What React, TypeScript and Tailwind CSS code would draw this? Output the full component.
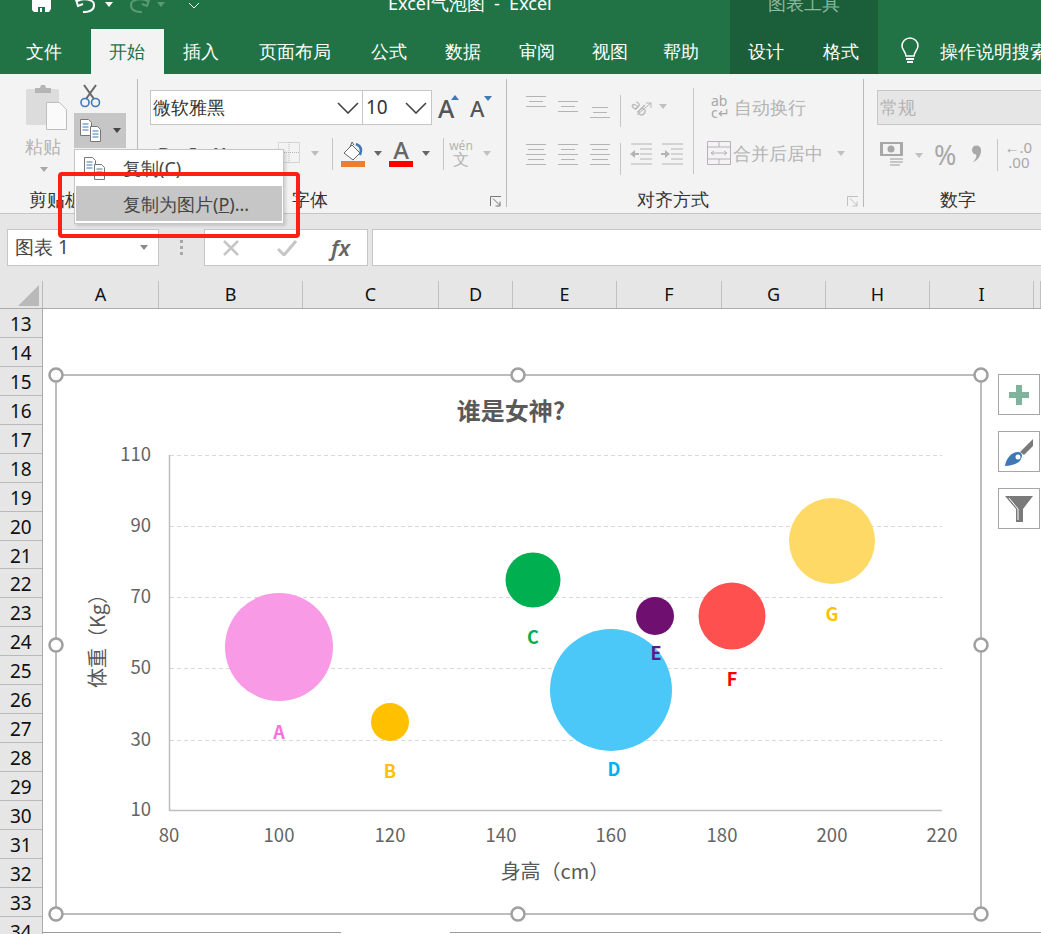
import React from "react";

const D = "#b4b4b4";

function Lines({ rows, w = 20, h = 22, color = D }: { rows: [number, number, number][]; w?: number; h?: number; color?: string }) {
  return (
    <svg width={w} height={h} viewBox={`0 0 ${w} ${h}`} className="block shrink-0">
      {rows.map(([y, a, b], i) => (
        <rect key={i} x={a} y={y} width={b - a} height="1" fill={color} />
      ))}
    </svg>
  );
}

function Caret({ className = "", color = "#a8a8a8" }: { className?: string; color?: string }) {
  return (
    <svg width="8" height="5" viewBox="0 0 8 5" className={"block shrink-0 " + className}>
      <path d="M0 0h8L4 5z" fill={color} />
    </svg>
  );
}

function Chev() {
  return (
    <svg width="22" height="12" viewBox="0 0 22 12" className="block shrink-0">
      <path d="M1 1l10 10L21 1" fill="none" stroke="#444" strokeWidth="1.6" />
    </svg>
  );
}

function CopyIcon() {
  return (
    <svg width="22" height="23" viewBox="0 0 22 23" className="block shrink-0">
      <path d="M.5.5h8l3 3v13H.5z" fill="#fff" stroke="#777" />
      <path d="M2.5 5h6M2.5 8h6M2.5 11h6" stroke="#3f78b5" />
      <path d="M10.5 7.5h7l3 3v12h-10z" fill="#fff" stroke="#777" />
      <path d="M12.500 12h6M12.500 15h6M12.500 18h6" stroke="#3f78b5" />
    </svg>
  );
}

function Launcher() {
  return (
    <svg width="12" height="11" viewBox="0 0 12 11" className="block">
      <path d="M.5 10V.5H11M3 2.500l7 7M10 5.500v4.500H5.500" fill="none" stroke="#777" />
    </svg>
  );
}

function Group({ width, label, labelClass = "", launcher, children }: { width: number; label: string; labelClass?: string; launcher?: string; children: React.ReactNode }) {
  return (
    <div className="relative flex flex-col h-[128px] border-r border-[#b9b9b9] shrink-0" style={{ width }}>
      <div className="flex-1 min-h-0">{children}</div>
      <div className={"relative h-[22px] text-[18px] leading-[28px] text-[#333] " + labelClass}>
        {label}
        {launcher && <div className={"absolute right-[4px] top-[11px] " + launcher}><Launcher /></div>}
      </div>
    </div>
  );
}

const columns: [string, number][] = [["A", 116], ["B", 144], ["C", 136], ["D", 74], ["E", 104], ["F", 105], ["G", 104], ["H", 104], ["I", 104], ["", 7]];
const rows = Array.from({ length: 22 }, (_, i) => 13 + i);

const bubbles = [
  { cx: 279, cy: 647, r: 54, fill: "#f99ae6", lab: "A", lx: 279, ly: 739, lc: "#fb6fdf" },
  { cx: 390, cy: 722, r: 19, fill: "#ffc000", lab: "B", lx: 390, ly: 778, lc: "#ffc000" },
  { cx: 533, cy: 580, r: 27.500, fill: "#00b050", lab: "C", lx: 533, ly: 644, lc: "#00b050" },
  { cx: 611, cy: 690, r: 61, fill: "#4bc8f7", lab: "D", lx: 614, ly: 776, lc: "#00b0f0" },
  { cx: 655, cy: 616, r: 19, fill: "#6f0f70", lab: "E", lx: 656, ly: 660, lc: "#5c1a8c" },
  { cx: 732, cy: 616, r: 33.500, fill: "#ff5050", lab: "F", lx: 732, ly: 686, lc: "#ff0000" },
  { cx: 832, cy: 541, r: 43, fill: "#ffd966", lab: "G", lx: 832, ly: 621, lc: "#ffc000" },
];

function Chart() {
  const handles: [number, number][] = [[56, 375], [518, 375], [981, 375], [56, 645], [981, 645], [56, 914], [518, 914], [981, 914]];
  const font = { fontFamily: "'Noto Sans CJK SC','Noto Sans',sans-serif" };
  return (
    <svg width="925" height="539" viewBox="56 375 925 539" className="absolute left-[56px] top-[66px] overflow-visible" style={font}>
      <rect x="56" y="375" width="925" height="539" fill="#fff" stroke="#a6a6a6" strokeWidth="1.500" />
      {[455, 526, 597, 668, 740].map((y) => (
        <line key={y} x1="170" x2="942" y1={y + 0.5} y2={y + 0.5} stroke="#d9d9d9" strokeDasharray="4 3" />
      ))}
      <path d="M169.500 455V810.500H942" fill="none" stroke="#bfbfbf" strokeWidth="1.500" />
      {[["110", 455], ["90", 526], ["70", 597], ["50", 668], ["30", 740], ["10", 810]].map(([t, y]) => (
        <text key={t} x="151" y={Number(y) + 6} textAnchor="end" fontSize="18.500" fill="#646464">{t}</text>
      ))}
      {[["80", 169], ["100", 279], ["120", 390], ["140", 501], ["160", 611], ["180", 722], ["200", 832], ["220", 942]].map(([t, x]) => (
        <text key={t} x={x} y="842" textAnchor="middle" fontSize="18.500" fill="#646464">{t}</text>
      ))}
      <text x="511" y="420" textAnchor="middle" fontSize="24" fontWeight="700" fill="#595959">谁是女神?</text>
      <text x="555" y="879" textAnchor="middle" fontSize="20" fill="#595959">身高（cm）</text>
      <text transform="translate(105 636) rotate(-90)" textAnchor="middle" fontSize="20" fill="#595959">体重（Kg）</text>
      {bubbles.map((b) => (
        <circle key={b.lab} cx={b.cx} cy={b.cy} r={b.r} fill={b.fill} />
      ))}
      {bubbles.map((b) => (
        <text key={b.lab} x={b.lx} y={b.ly} textAnchor="middle" fontSize="18" fontWeight="700" fill={b.lc}>{b.lab}</text>
      ))}
      {handles.map(([x, y], i) => (
        <circle key={i} cx={x} cy={y} r="6.500" fill="#fff" stroke="#a0a0a0" strokeWidth="2.500" />
      ))}
    </svg>
  );
}

export default function App() {
  return (
    <div className="relative w-[1041px] h-[934px] overflow-hidden bg-white flex flex-col font-['Noto_Sans_CJK_SC','Noto_Sans',sans-serif]">
      {/* title + tabs */}
      <div className="relative h-[74px] shrink-0 bg-[#217346] text-white overflow-hidden">
        <div className="flex h-[29px] overflow-hidden items-start">
          <svg width="22" height="12" viewBox="0 0 22 12" className="ml-[31px] shrink-0">
            <path d="M1 0h19v9l-2 3H3l-2-2z" fill="#fff" />
            <path d="M7 7h7v5H7z" fill="#217346" />
            <path d="M9 8h2v4H9z" fill="#fff" />
          </svg>
          <svg width="24" height="14" viewBox="0 0 24 14" className="ml-[21px] shrink-0">
            <path d="M3 1c6-3 17-2 17 4s-6 7-11 7" fill="none" stroke="#fff" strokeWidth="2" />
            <path d="M2 0l2 6 5-2" fill="none" stroke="#fff" strokeWidth="2" />
          </svg>
          <Caret color="#fff" className="ml-[7px] mt-[2px]" />
          <svg width="24" height="14" viewBox="0 0 24 14" className="ml-[14px] shrink-0">
            <path d="M21 1C15-2 4-1 4 5s6 7 11 7" fill="none" stroke="#5b9a78" strokeWidth="2" />
            <path d="M22 0l-2 6-5-2" fill="none" stroke="#5b9a78" strokeWidth="2" />
          </svg>
          <Caret color="#5b9a78" className="ml-[6px] mt-[2px]" />
          <svg width="12" height="7" viewBox="0 0 12 7" className="ml-[23px] mt-[2px] shrink-0">
            <path d="M1 1l5 5 5-5" fill="none" stroke="#fff" />
          </svg>
          <div className="ml-[188px] -mt-[10px] text-[18px] leading-[26px] whitespace-pre">Excel气泡图  -  Excel</div>
        </div>
        <div className="absolute left-[730px] top-0 w-[148px] h-[74px] bg-[#1b5e3a] flex justify-center">
          <div className="-mt-[10px] text-[18px] leading-[26px] text-[#8cb9a0]">图表工具</div>
        </div>
        <div className="relative flex h-[45px] text-[18px] leading-[45px]">
          <div className="w-[91px] shrink-0 text-center">
            <span className="mr-[3px]">文件</span>
          </div>
          <div className="w-[73px] shrink-0 text-center bg-[#f3f3f3] text-[#217346]"><span className="mr-[1px]">开始</span></div>
          <div className="w-[74px] shrink-0 text-center">插入</div>
          <div className="w-[114px] shrink-0 text-center">页面布局</div>
          <div className="w-[73px] shrink-0 text-center">公式</div>
          <div className="w-[75px] shrink-0 text-center">数据</div>
          <div className="w-[74px] shrink-0 text-center">审阅</div>
          <div className="w-[71px] shrink-0 text-center">视图</div>
          <div className="w-[72px] shrink-0 text-center">帮助</div>
          <div className="w-[74px] shrink-0 ml-[12px] text-center">设计</div>
          <div className="w-[76px] shrink-0 text-center">格式</div>
          <svg width="20" height="28" viewBox="0 0 20 28" className="ml-[21px] mt-[8px] shrink-0">
            <path d="M6 19c0-4-4-6-4-10a8 8 0 0 1 16 0c0 4-4 6-4 10z" fill="none" stroke="#fff" strokeWidth="1.500" />
            <path d="M6 22h8M7 25h6" stroke="#fff" strokeWidth="2" />
          </svg>
          <div className="ml-[20px] shrink-0 whitespace-nowrap">操作说明搜索</div>
        </div>
      </div>

      {/* ribbon */}
      <div className="h-[140px] shrink-0 bg-[#f3f3f3] border-b border-[#c6c6c6] pt-[5px] flex items-start overflow-hidden">
        {/* clipboard */}
        <Group width={138} label="剪贴板" labelClass="pl-[29px]">
          <div className="flex">
            <div className="w-[74px] pl-[26px] pt-[5px] flex flex-col">
              <svg width="41" height="46" viewBox="0 0 41 46" className="block">
                <rect x="0" y="5" width="33" height="36" rx="2" fill="#dcdcdc" />
                <path d="M9 4h5l1-3h4l1 3h5v5H9z" fill="#b5b5b5" />
                <path d="M20.500 18.500h13l7 7v20h-20z" fill="#fafafa" stroke="#bdbdbd" />
              </svg>
              <div className="text-[18px] leading-[26px] text-[#b4b4b4] -ml-[1px] mt-[3px]">粘贴</div>
              <Caret className="ml-[14px] mt-[8px]" />
            </div>
            <div className="flex flex-col">
              <svg width="22" height="24" viewBox="0 0 22 24" className="ml-[5px] mt-[5px] block">
                <path d="M5 1l10 14M17 1L7 15" stroke="#666" strokeWidth="2" fill="none" />
                <circle cx="6" cy="18.500" r="4" fill="none" stroke="#3f78b5" strokeWidth="1.600" />
                <circle cx="16.500" cy="18.500" r="4" fill="none" stroke="#3f78b5" strokeWidth="1.600" />
              </svg>
              <div className="w-[52px] h-[35px] mt-[5px] bg-[#c6c6c6] flex items-center pl-[6px]">
                <CopyIcon />
                <Caret color="#444" className="ml-[11px] -mt-[1px]" />
              </div>
            </div>
          </div>
        </Group>

        {/* font */}
        <Group width={369} label="字体" labelClass="pl-[154px]" launcher="!right-[4px]">
          <div className="pl-[12px] pt-[11px] flex items-center">
            <div className="w-[213px] h-[35px] bg-white border border-[#c6c6c6] flex items-center justify-between pl-[2px] pr-[3px] text-[18px] text-[#333]">
              微软雅黑
              <Chev />
            </div>
            <div className="w-[69px] h-[35px] bg-white border border-l-0 border-[#c6c6c6] flex items-center justify-between pl-[3px] pr-[4px] text-[19px] text-[#333]">
              10
              <Chev />
            </div>
            <div className="relative ml-[6px] w-[20px] text-[25px] leading-[30px] font-medium text-[#555]">
              A
              <div className="absolute -right-[1px] top-[2px] w-0 h-0 border-x-[4px] border-b-[5px] border-x-transparent border-b-[#3f78b5]" />
            </div>
            <div className="relative ml-[12px] w-[18px] text-[22px] leading-[30px] font-medium text-[#555]">
              A
              <div className="absolute -right-[4px] top-[3px] w-0 h-0 border-x-[4px] border-t-[5px] border-x-transparent border-t-[#3f78b5]" />
            </div>
          </div>
          <div className="flex items-center pt-[13px] h-[44px]">
            <div className="ml-[20px] w-[120px] shrink-0 flex gap-[18px] text-[18px] font-bold text-[#555] leading-[32px]">
              <span>B</span><span className="italic">I</span><span className="underline">U</span>
            </div>
            <svg width="22" height="21" viewBox="0 0 22 21" className="block shrink-0 -mt-[3px]">
              <rect x=".5" y=".5" width="21" height="20" fill="none" stroke="#b9b9b9" strokeDasharray="1 1" />
              <path d="M11 0v21M0 10.500h22" stroke="#b9b9b9" strokeDasharray="1 1" />
            </svg>
            <Caret className="ml-[11px]" color="#bdbdbd" />
            <div className="ml-[13px] h-[32px] border-l border-[#c6c6c6]" />
            <svg width="24" height="26" viewBox="0 0 24 26" className="ml-[8px] block shrink-0">
              <path d="M3 12l8-8 8 8-7 7z" fill="#fff" stroke="#666" />
              <path d="M9 6l2-5 2 3" fill="none" stroke="#666" />
              <path d="M15 3c5 2 6 6 4 11" fill="none" stroke="#3f78b5" strokeWidth="2.500" />
              <rect x="0" y="20" width="24" height="6" fill="#ed7d31" />
            </svg>
            <Caret className="ml-[9px]" color="#666" />
            <div className="ml-[7px] w-[24px] flex flex-col items-center">
              <div className="text-[24px] leading-[20px] font-medium text-[#666]">A</div>
              <div className="w-[24px] h-[6px] bg-[#ff0000] mt-[1px]" />
            </div>
            <Caret className="ml-[9px]" color="#666" />
            <div className="ml-[13px] h-[32px] border-l border-[#c6c6c6]" />
            <div className="ml-[6px] w-[22px] flex flex-col items-center text-[#b4b4b4]">
              <div className="text-[12px] leading-[10px]">wén</div>
              <div className="text-[16px] leading-[16px]">文</div>
            </div>
            <Caret className="ml-[11px]" color="#c0c0c0" />
          </div>
        </Group>

        {/* alignment */}
        <Group width={357} label="对齐方式" labelClass="pl-[130px]" launcher="opacity-40">
          <div className="flex">
            <div className="flex flex-col pt-[16px] gap-[16px] shrink-0">
              <div className="flex h-[24px]">
                <div className="ml-[19px]"><Lines rows={[[1, 0, 20], [6, 3, 17], [11, 0, 20]]} /></div>
                <div className="ml-[12px]"><Lines rows={[[6, 0, 20], [11, 3, 17], [16, 0, 20]]} /></div>
                <div className="ml-[12px]"><Lines rows={[[12, 2, 18], [17, 3, 17], [22, 0, 20]]} w={20} h={24} /></div>
                <div className="ml-[10px] h-[32px] border-l border-[#c6c6c6]" />
                <svg width="22" height="22" viewBox="0 0 22 22" className="ml-[10px] block shrink-0">
                  <text x="1" y="17" fontSize="14" fill={D} transform="rotate(45 8 12)">ab</text>
                  <path d="M6 20L20 8M20 8h-5M20 8v5" stroke={D} fill="none" />
                </svg>
                <Caret className="ml-[6px] mt-[9px]" color="#c0c0c0" />
              </div>
              <div className="flex h-[24px] mt-[8px]">
                <div className="ml-[19px]"><Lines h={22} rows={[[1, 0, 20], [6, 2, 18], [11, 0, 20], [16, 2, 18], [21, 0, 20]]} /></div>
                <div className="ml-[12px]"><Lines h={22} rows={[[1, 0, 20], [6, 3, 17], [11, 0, 20], [16, 3, 17], [21, 0, 20]]} /></div>
                <div className="ml-[12px]"><Lines h={22} rows={[[1, 0, 20], [6, 2, 18], [11, 0, 20], [16, 2, 18], [21, 0, 20]]} /></div>
                <div className="ml-[10px] h-[32px] border-l border-[#c6c6c6]" />
                <svg width="22" height="22" viewBox="0 0 22 22" className="ml-[9px] block shrink-0">
                  <path d="M1 1h21M10 6h12M10 11h12M10 16h12M1 21h21" stroke={D} />
                  <path d="M0 11l5-4v3h4v2H5v3z" fill={D} />
                </svg>
                <svg width="22" height="22" viewBox="0 0 22 22" className="ml-[9px] block shrink-0">
                  <path d="M1 1h21M10 6h12M10 11h12M10 16h12M1 21h21" stroke={D} />
                  <path d="M9 11L4 7v3H0v2h4v3z" fill={D} />
                </svg>
              </div>
            </div>
            <div className="ml-[10px] mt-[9px] h-[86px] border-l border-[#c6c6c6]" />
            <div className="flex flex-col pl-[13px] pt-[11px]">
              <div className="flex items-center h-[34px] pl-[4px] gap-[5px] text-[18px] text-[#b4b4b4] whitespace-nowrap">
                <div className="w-[18px] text-[14px] leading-[12px] text-[#a8a8a8]">ab<br />c↵</div>
                自动换行
              </div>
              <div className="flex items-center h-[34px] mt-[12px] text-[18px] text-[#b4b4b4] whitespace-nowrap">
                <svg width="24" height="24" viewBox="0 0 24 24" className="block shrink-0">
                  <path d="M.5.5h23v23H.5zM0 6h24M0 18h24M12 0v6M12 18v6" fill="none" stroke="#b9b0bb" />
                  <path d="M4 12h16M4 12l3-2M4 12l3 2M20 12l-3-2M20 12l-3 2" stroke="#b4b4b4" fill="none" />
                </svg>
                <span className="ml-[2px]">合并后居中</span>
                <Caret className="ml-[14px]" color="#c0c0c0" />
              </div>
            </div>
          </div>
        </Group>

        {/* number */}
        <div className="relative flex flex-col h-[128px] flex-1 min-w-0 overflow-visible">
          <div className="flex-1 min-h-0 pl-[13px] pt-[11px]">
            <div className="w-[300px] h-[35px] bg-[#e6e6e6] border border-[#c6c6c6] pl-[2px] text-[18px] leading-[33px] text-[#b4b4b4]">常规</div>
            <div className="flex items-center mt-[14px] h-[32px] pl-[3px]">
              <svg width="24" height="28" viewBox="0 0 24 28" className="block shrink-0">
                <rect x="0" y="1" width="23" height="14" fill="#a8a8a8" />
                <rect x="3" y="3" width="17" height="10" fill="#f3f3f3" />
                <circle cx="11" cy="8" r="3.500" fill="#a8a8a8" />
                <path d="M10 18h13M10 21h13M10 24h10" stroke="#c6c6c6" strokeWidth="2" />
              </svg>
              <Caret className="ml-[11px]" color="#c0c0c0" />
              <div className="ml-[11px] text-[27px] leading-[30px] text-[#a8a8a8]">%</div>
              <svg width="11" height="18" viewBox="0 0 11 18" className="ml-[15px] -mt-[3px] block shrink-0">
                <circle cx="5.500" cy="5" r="4.500" fill="#a8a8a8" />
                <path d="M10 5c0 6-3 10-8 12 3-3 4-6 3-8z" fill="#a8a8a8" />
              </svg>
              <div className="ml-[15px] h-[32px] border-l border-[#c6c6c6]" />
              <div className="ml-[6px] text-[15px] leading-[15px] text-[#a8a8a8] whitespace-pre">←.0{"\n"} .00</div>
            </div>
          </div>
          <div className="h-[22px] pl-[76px] text-[18px] leading-[28px] text-[#333]">数字</div>
        </div>
      </div>

      {/* status strip */}
      <div className="h-[15px] shrink-0 bg-[#e6e6e6]" />

      {/* formula bar */}
      <div className="h-[37px] shrink-0 bg-[#e6e6e6] flex">
        <div className="ml-[7px] w-[152px] bg-white border border-[#c6c6c6] flex items-center justify-between pl-[7px] pr-[10px] text-[19px] text-[#444]">
          图表 1
          <Caret color="#888" />
        </div>
        <div className="w-[45px] flex flex-col items-center justify-center gap-[3px]">
          <div className="w-[3px] h-[3px] bg-[#a8a8a8]" />
          <div className="w-[3px] h-[3px] bg-[#a8a8a8]" />
          <div className="w-[3px] h-[3px] bg-[#a8a8a8]" />
        </div>
        <div className="w-[164px] bg-white border border-[#c6c6c6] flex items-center">
          <svg width="16" height="16" viewBox="0 0 16 16" className="ml-[18px] block">
            <path d="M1 1l14 14M15 1L1 15" stroke="#c6c6c6" strokeWidth="2.500" />
          </svg>
          <svg width="20" height="16" viewBox="0 0 20 16" className="ml-[38px] block">
            <path d="M1 9l6 6L19 1" fill="none" stroke="#c6c6c6" strokeWidth="3" />
          </svg>
          <span className="ml-[34px] font-['Liberation_Serif',serif] italic font-semibold text-[22px] text-[#666]">fx</span>
        </div>
        <div className="ml-[4px] flex-1 bg-white border border-r-0 border-[#c6c6c6]" />
      </div>

      {/* gap */}
      <div className="h-[15px] shrink-0 bg-[#e6e6e6]" />

      {/* column headers */}
      <div className="h-[28px] shrink-0 bg-[#e6e6e6] border-b border-[#ababab] flex">
        <div className="w-[43px] shrink-0 border-r border-[#b9b9b9] flex items-end justify-end pr-[3px] pb-[2px]">
          <div className="w-0 h-0 border-l-[21px] border-b-[21px] border-l-transparent border-b-[#b9b9b9]" />
        </div>
        {columns.map(([c, w], i) => (
          <div key={i} className="shrink-0 border-r border-[#c0c0c0] text-center text-[18px] leading-[27px] text-[#111]" style={{ width: w }}>{c}</div>
        ))}
      </div>

      {/* sheet */}
      <div className="relative flex-1 min-h-0 overflow-hidden flex">
        <div className="w-[43px] shrink-0 bg-[#e6e6e6] border-r border-[#ababab]">
          {rows.map((r) => (
            <div key={r} className="h-[28.95px] border-b border-[#b9b9b9] pl-[10px] text-[19px] leading-[30px] text-[#111]">{r}</div>
          ))}
        </div>
        <div className="absolute left-[43px] right-0 bottom-0 h-[2px] flex">
          <div className="w-[298px] border-t border-[#9a9a9a]" />
          <div className="w-[109px]" />
          <div className="flex-1 border-t border-[#9a9a9a]" />
        </div>
        <Chart />
        {/* chart side buttons */}
        <div className="absolute left-[998px] top-[65px] flex flex-col gap-[16px]">
          <div className="w-[42px] h-[41px] bg-white border border-[#a6a6a6] flex items-center justify-center">
            <svg width="20" height="20" viewBox="0 0 20 20"><path d="M7 0h6v7h7v6h-7v7H7v-7H0V7h7z" fill="#7fb39b" /></svg>
          </div>
          <div className="w-[42px] h-[41px] bg-white border border-[#a6a6a6] flex items-center justify-center">
            <svg width="30" height="30" viewBox="0 0 30 30">
              <path d="M16 15L29 2v7l-9 9z" fill="#7a7a7a" />
              <path d="M1 29c1-7 6-14 13-14 4 0 5 4 3 7-2 5-10 7-16 7z" fill="#3f78b5" />
              <circle cx="14" cy="20" r="2.500" fill="#fff" />
            </svg>
          </div>
          <div className="w-[42px] h-[41px] bg-white border border-[#a6a6a6] flex items-center justify-center">
            <svg width="28" height="28" viewBox="0 0 28 28">
              <path d="M0 1h28L18 14v13h-7V14z" fill="#7a7a7a" />
              <path d="M4 3l9 11v11" fill="none" stroke="#fff" />
            </svg>
          </div>
        </div>
      </div>

      {/* copy dropdown */}
      <div className="absolute left-[74px] top-[149px] w-[210px] h-[75px] bg-white border border-[#c6c6c6] shadow-[2px_2px_3px_rgba(0,0,0,0.15)] text-[18px] text-[#444]">
        <div className="h-[36px] flex items-center pl-[9px]">
          <CopyIcon />
          <span className="ml-[17px]">复制(C)</span>
        </div>
        <div className="mx-[1px] h-[36px] bg-[#c6c6c6] border-b border-white pl-[47px] leading-[36px] whitespace-nowrap">
          复制为图片(<span className="underline">P</span>)...
        </div>
      </div>

      {/* red highlight */}
      <div className="absolute left-[58px] top-[172px] w-[242px] h-[66px] border-[4px] border-[#ff2015] rounded-[4px]" />
    </div>
  );
}
